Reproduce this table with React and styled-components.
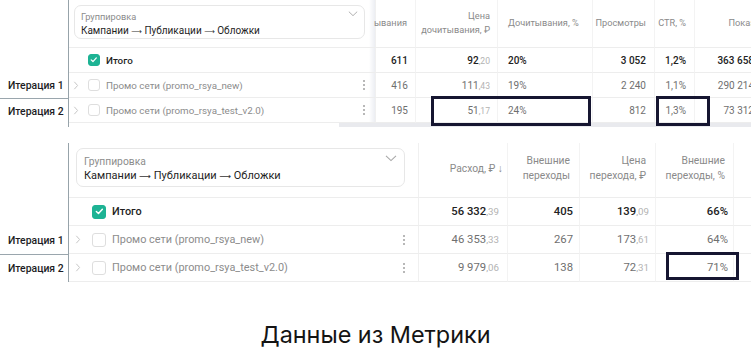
import React from "react";
import styled, { createGlobalStyle } from "styled-components";

const GlobalStyle = createGlobalStyle`
  html, body {
    margin: 0;
    padding: 0;
    background: #fff;
  }
  body {
    font-family: Roboto, "Noto Sans", sans-serif;
    color: #1f1f1f;
  }
  * { box-sizing: border-box; }
`;

const sizes = {
  small: { head: 48, row: 25, font: 9.8, val: 10, sub: 9.2, card: 10, box: 12, pl: 4, gap: 9, pr: 10, cardM: "5px 10px 8px 5px", cardP: "5px 6px", chev: 10 },
  big: { head: 55, row: 28, font: 10.9, val: 11.3, sub: 10.3, card: 11, box: 14, pl: 6, gap: 11, pr: 13, cardM: "5px 13px 10px 7px", cardP: "6px 7px", chev: 12 },
};

const Page = styled.div`
  width: 751px;
  height: 362px;
  overflow: hidden;
  display: flex;
  flex-direction: column;
`;

const Shot = styled.section`
  display: grid;
  grid-template-columns: 68px 1fr;
  margin-top: ${(p) => p.$top}px;
`;

const Labels = styled.div`
  display: grid;
  grid-template-rows: ${(p) => p.$s.head + p.$s.row}px ${(p) => p.$s.row}px ${(p) => p.$s.row}px;
  align-content: start;
`;

const Label = styled.div`
  grid-row: ${(p) => p.$row};
  display: flex;
  align-items: center;
  padding-left: 8px;
  font-size: 10.4px;
  font-weight: 500;
  white-space: nowrap;
  color: #1c1c24;
  border-top: ${(p) => (p.$line ? "1px solid #9aa6ad" : "none")};
`;

const Panel = styled.div`
  position: relative;
  border-left: 1px solid #97a3aa;
  overflow: hidden;
  display: flex;
  flex-direction: column;
`;

const Table = styled.div`
  display: grid;
  grid-template-columns: ${(p) => p.$cols};
  grid-template-rows: ${(p) => p.$s.head}px repeat(3, ${(p) => p.$s.row}px);
`;

const Cell = styled.div`
  display: flex;
  align-items: center;
  justify-content: ${(p) => (p.$align === "left" ? "flex-start" : "flex-end")};
  padding: ${(p) => (p.$align === "left" ? "0 4px 0 10px" : `0 ${p.$pr || 7}px 0 4px`)};
  border-bottom: 1px solid #ededed;
  border-right: 1px solid #f3f3f3;
  font-size: ${(p) => p.$s.val}px;
  white-space: nowrap;
  color: ${(p) => (p.$bold ? "#222" : "#6f6f6f")};
  font-weight: ${(p) => (p.$bold ? 500 : 400)};
`;

const HeadCell = styled(Cell)`
  color: #8a8a8a;
  font-weight: 400;
  font-size: ${(p) => p.$s.sub}px;
  line-height: 1.42;
  flex-direction: column;
  align-items: ${(p) => (p.$align === "left" ? "flex-start" : "flex-end")};
  justify-content: center;
  text-align: ${(p) => p.$align || "right"};
  padding-bottom: 2px;
`;

const NameCell = styled.div`
  display: flex;
  align-items: center;
  padding: 0 ${(p) => p.$s.pr}px 0 ${(p) => p.$s.pl}px;
  border-bottom: 1px solid #ededed;
  border-right: 1px solid #f0f0f0;
  font-size: ${(p) => p.$s.font}px;
  color: ${(p) => (p.$total ? "#1f1f1f" : "#8c8c8c")};
  font-weight: ${(p) => (p.$total ? 500 : 400)};
  white-space: nowrap;
  background: ${(p) =>
    p.$shade ? "linear-gradient(to right, #fff calc(100% - 6px), #eceef3 100%)" : "#fff"};
`;

const HeadName = styled.div`
  display: flex;
  align-items: stretch;
  padding: ${(p) => p.$s.cardM};
  border-bottom: 1px solid #ededed;
  border-right: 1px solid #f0f0f0;
  background: ${(p) =>
    p.$shade ? "linear-gradient(to right, #fff calc(100% - 6px), #eceef3 100%)" : "#fff"};
`;

const Card = styled.div`
  flex: 1;
  display: flex;
  align-items: flex-start;
  justify-content: space-between;
  padding: ${(p) => p.$s.cardP};
  border: 1px solid #e7e7e7;
  border-radius: 7px;
`;

const CardText = styled.div`
  display: flex;
  flex-direction: column;
  gap: 1px;
`;

const CardLabel = styled.span`
  font-size: ${(p) => p.$s.sub}px;
  color: #8c8c8c;
  line-height: 1.3;
`;

const CardValue = styled.span`
  font-size: ${(p) => p.$s.card}px;
  color: #1f1f1f;
  line-height: 1.35;
  white-space: nowrap;
`;

const LongArrow = styled.span`
  font-family: "DejaVu Sans", sans-serif;
  font-size: 0.74em;
  color: #333;
`;

const Expand = styled.span`
  width: 6px;
  display: flex;
  justify-content: center;
  margin-right: ${(p) => p.$s.gap}px;
`;

const Check = styled.span`
  width: ${(p) => p.$s.box}px;
  height: ${(p) => p.$s.box}px;
  flex: none;
  border-radius: 3px;
  margin-right: 6px;
  display: flex;
  align-items: center;
  justify-content: center;
  border: 1px solid ${(p) => (p.$on ? "#1db394" : "#dedede")};
  background: ${(p) => (p.$on ? "#1db394" : "#fff")};
`;

const Kebab = styled.span`
  margin-left: auto;
  display: flex;
  flex-direction: column;
  gap: 2px;
  i {
    width: 2px;
    height: 2px;
    border-radius: 50%;
    background: #a0a0a0;
  }
`;

const Dec = styled.span`
  color: #b3b3b3;
  font-weight: 400;
  font-size: 0.86em;
`;

const Track = styled.div`
  height: 4px;
  margin-left: 270px;
  background: #e9eaee;
`;

const Mark = styled.div`
  position: absolute;
  border: 3px solid #161631;
  pointer-events: none;
`;

const Caption = styled.div`
  margin-top: 38px;
  text-align: center;
  font-family: Inter, "Noto Sans", sans-serif;
  font-size: 23.4px;
  line-height: 29px;
  color: #141414;
`;

const Chevron = ({ w }) => (
  <svg width={w} height={w * 0.55} viewBox="0 0 12 6.6" fill="none">
    <path d="M1 0.8 L6 5.6 L11 0.8" stroke="#a8a8a8" strokeWidth="1.1" />
  </svg>
);

const Arrow = () => (
  <svg width="6" height="9" viewBox="0 0 6 9" fill="none">
    <path d="M1.3 0.8 L4.6 4.5 L1.3 8.2" stroke="#c6c6c6" strokeWidth="1" />
  </svg>
);

const Tick = ({ s }) => (
  <svg width={s * 0.62} height={s * 0.62} viewBox="0 0 10 10" fill="none">
    <path d="M1.6 5.2 L4 7.5 L8.5 2.6" stroke="#fff" strokeWidth="1.7" strokeLinecap="round" strokeLinejoin="round" />
  </svg>
);

function Value({ v }) {
  if (Array.isArray(v)) {
    return (
      <span>
        {v[0]}
        <Dec>{v[1]}</Dec>
      </span>
    );
  }
  return <span>{v}</span>;
}

function DataTable({ s, cols, heads, rows, shade, marks, track }) {
  const names = ["Итого", "Промо сети (promo_rsya_new)", "Промо сети (promo_rsya_test_v2.0)"];
  return (
    <Panel>
      <Table $s={s} $cols={cols.map((c) => c.w + "px").join(" ")}>
        <HeadName $s={s} $shade={shade}>
          <Card $s={s}>
            <CardText>
              <CardLabel $s={s}>Группировка</CardLabel>
              <CardValue $s={s}>
                Кампании <LongArrow>⟶</LongArrow> Публикации <LongArrow>⟶</LongArrow> Обложки
              </CardValue>
            </CardText>
            <Chevron w={s.chev} />
          </Card>
        </HeadName>
        {heads.map((h, i) => (
          <HeadCell key={"h" + i} $s={s} $align={cols[i + 1].align} $pr={cols[i + 1].hp}>
            {[].concat(h).map((line, j) => (
              <span key={j}>{line}</span>
            ))}
          </HeadCell>
        ))}
        {rows.map((r, i) => (
          <React.Fragment key={i}>
            <NameCell $s={s} $total={i === 0} $shade={shade}>
              <Expand $s={s}>{i > 0 && <Arrow />}</Expand>
              <Check $s={s} $on={i === 0}>
                {i === 0 && <Tick s={s.box} />}
              </Check>
              {names[i]}
              {i > 0 && (
                <Kebab>
                  <i />
                  <i />
                  <i />
                </Kebab>
              )}
            </NameCell>
            {r.map((v, j) => (
              <Cell key={j} $s={s} $bold={i === 0} $align={cols[j + 1].align} $pr={cols[j + 1].vp}>
                <Value v={v} />
              </Cell>
            ))}
          </React.Fragment>
        ))}
      </Table>
      {track && <Track />}
      {marks.map((m, i) => (
        <Mark key={i} style={{ left: m[0], top: m[1], width: m[2], height: m[3] }} />
      ))}
    </Panel>
  );
}

const topCols = [
  { w: 307 },
  { w: 40, vp: 7, hp: 8 },
  { w: 82, vp: 7, hp: 7 },
  { w: 95, align: "left" },
  { w: 62, vp: 8, hp: 8 },
  { w: 40, vp: 8, hp: 8 },
  { w: 90, vp: 30, hp: 22 },
];

const topHeads = ["ывания", ["Цена", "дочитывания, ₽"], "Дочитывания, %", "Просмотры", "CTR, %", "Показы"];

const topRows = [
  ["611", ["92", ",20"], "20%", "3\u00A0052", "1,2%", "363\u00A0658"],
  ["416", ["111", ",43"], "19%", "2\u00A0240", "1,1%", "290\u00A0214"],
  ["195", ["51", ",17"], "24%", "812", "1,3%", "73\u00A0312"],
];

const botCols = [
  { w: 350 },
  { w: 89, vp: 8, hp: 4 },
  { w: 72, vp: 6, hp: 9 },
  { w: 76, vp: 6, hp: 9 },
  { w: 78, vp: 5, hp: 8 },
  { w: 40, vp: 6, hp: 6 },
];

const botHeads = ["Расход, ₽ ↓", ["Внешние", "переходы"], ["Цена", "перехода, ₽"], ["Внешние", "переходы, %"], ""];

const botRows = [
  [["56\u00A0332", ",39"], "405", ["139", ",09"], "66%", ""],
  [["46\u00A0353", ",33"], "267", ["173", ",61"], "64%", ""],
  [["9\u00A0979", ",06"], "138", ["72", ",31"], "71%", ""],
];

export default function App() {
  return (
    <>
      <GlobalStyle />
      <Page>
        <Shot $top={0}>
          <Labels $s={sizes.small}>
            <Label $row={2}>Итерация 1</Label>
            <Label $row={3} $line>
              Итерация 2
            </Label>
          </Labels>
          <DataTable
            s={sizes.small}
            cols={topCols}
            heads={topHeads}
            rows={topRows}
            shade
            track
            marks={[
              [362, 96, 160, 30],
              [587, 96, 54, 30],
            ]}
          />
        </Shot>
        <Shot $top={16}>
          <Labels $s={sizes.big}>
            <Label $row={2}>Итерация 1</Label>
            <Label $row={3} $line>
              Итерация 2
            </Label>
          </Labels>
          <DataTable
            s={sizes.big}
            cols={botCols}
            heads={botHeads}
            rows={botRows}
            marks={[[597, 109, 73, 28]]}
          />
        </Shot>
        <Caption>Данные из Метрики</Caption>
      </Page>
    </>
  );
}
